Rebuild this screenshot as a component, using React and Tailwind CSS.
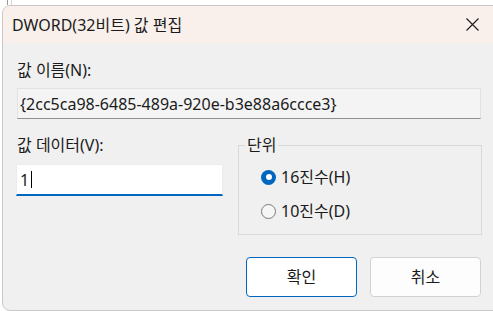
import React from "react";

const font = { fontFamily: '"Segoe UI", "Noto Sans", "Noto Sans CJK KR", sans-serif' };

function Radio({ checked, label }) {
  return (
    <label className="flex items-center h-[20px]">
      {checked ? (
        <span className="w-[15px] h-[15px] rounded-full bg-[#0067c0] flex items-center justify-center">
          <span className="w-[6px] h-[6px] rounded-full bg-white" />
        </span>
      ) : (
        <span className="w-[15px] h-[15px] rounded-full border border-[#7a7a7a] bg-[#f6f6f6]" />
      )}
      <span className="ml-[5px] text-[16px] leading-[20px] text-[#1b1b1b]">{label}</span>
    </label>
  );
}

export default function App() {
  return (
    <div className="w-[493px] h-[311px] bg-white overflow-hidden" style={font}>
      {/* bit of the window behind */}
      <div className="h-[5px] ml-[7px] w-[5px] border-l border-r border-l-[#9a9a9a] border-r-[#d6d6d6]" />

      <div className="ml-[2px] w-[520px] h-[306px] border border-[#c9c9c9] rounded-t-[8px] rounded-bl-[8px] bg-[#f0f0f0] overflow-hidden">
        {/* title bar */}
        <div className="h-[37px] bg-[#f9f0eb] flex items-center pl-[9px]">
          <span className="text-[16px] text-[#1b1b1b]">DWORD(32비트) 값 편집</span>
          <svg className="ml-auto mr-[42px]" width="13" height="13" viewBox="0 0 13 13">
            <path d="M0.5 0.5L12.5 12.5M12.5 0.5L0.5 12.5" stroke="#1b1b1b" strokeWidth="1.1" fill="none" />
          </svg>
        </div>

        <div className="pl-[13px]">
          <div className="mt-[17px] pl-[1px] text-[16px] leading-[20px] text-[#1b1b1b]">값 이름(N):</div>
          <div className="mt-[8px] ml-[1px] w-[464px] h-[31px] border border-[#e2e2e2] border-b-[#8f8f8f] bg-[#f4f4f4] flex items-center pl-[2px] text-[16px] text-[#1b1b1b]">
            {"{2cc5ca98-6485-489a-920e-b3e88a6ccce3}"}
          </div>

          <div className="mt-[16px] flex">
            <div className="w-[207px]">
              <div className="pl-[1px] text-[16px] leading-[20px] text-[#1b1b1b]">값 데이터(V):</div>
              <div className="mt-[9px] h-[32px] bg-white border border-[#ececec] border-b-2 border-b-[#0067c0] flex items-center pl-[3px] text-[16px] text-[#1b1b1b]">
                <span>1</span>
                <span className="ml-[2px] w-px h-[17px] bg-black" />
              </div>
            </div>

            <fieldset className="ml-[15px] w-[244px] h-[100px] border border-[#d9d9d9]">
              <legend className="ml-[6px] px-[2px] text-[16px] leading-[20px] text-[#1b1b1b]">단위</legend>
              <div className="mt-[12px] pl-[22px] flex flex-col gap-[14px]">
                <Radio checked label="16진수(H)" />
                <Radio label="10진수(D)" />
              </div>
            </fieldset>
          </div>

          <div className="mt-[22px] flex ml-[230px] gap-[13px]">
            <button className="w-[111px] h-[40px] rounded-[4px] border border-[#0067c0] bg-white text-[16px] text-[#1b1b1b]">
              확인
            </button>
            <button className="w-[111px] h-[40px] rounded-[4px] border border-[#d2d2d2] bg-[#fdfdfd] text-[16px] text-[#1b1b1b]">
              취소
            </button>
          </div>
        </div>
      </div>
    </div>
  );
}
